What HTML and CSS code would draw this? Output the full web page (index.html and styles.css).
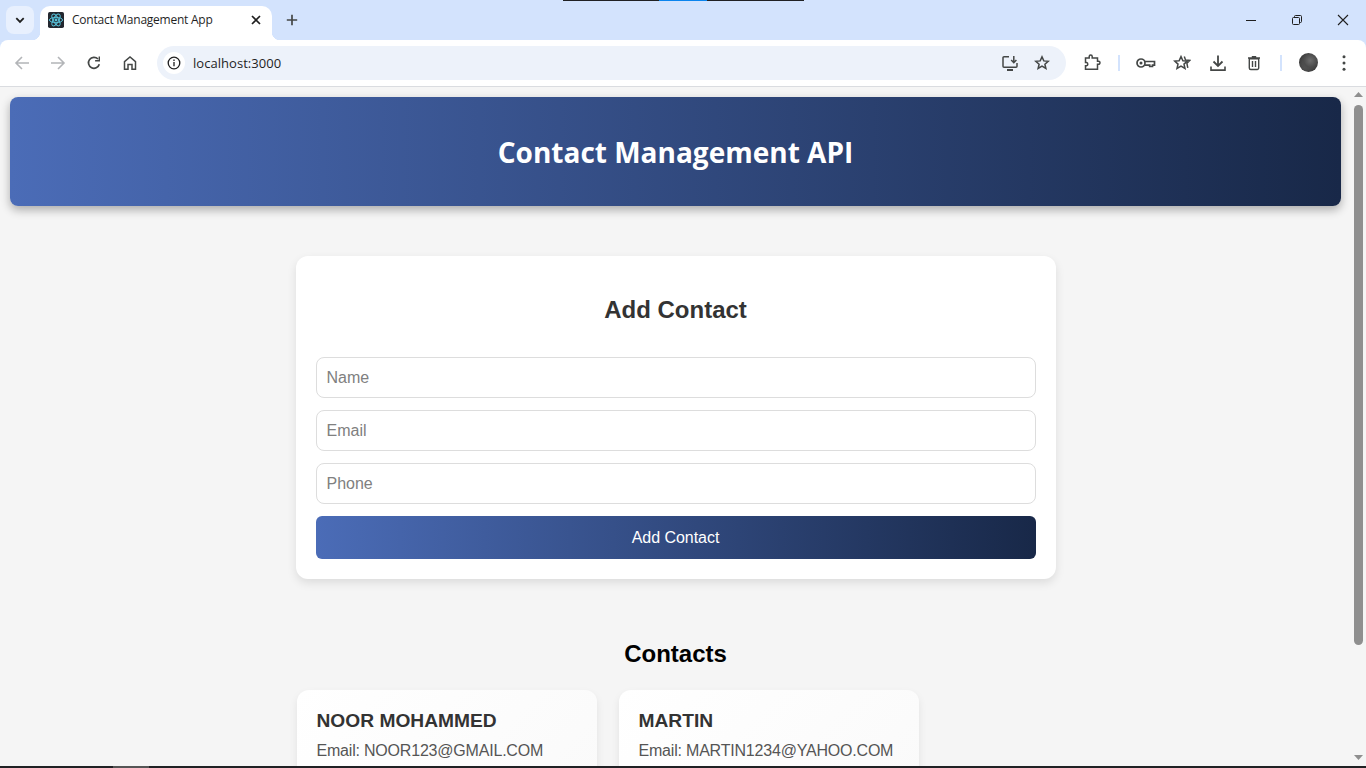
FILE: index.html
```html
<!DOCTYPE html>
<html lang="en">
<head>
<meta charset="utf-8">
<title>Contact Management App</title>
<link rel="stylesheet" href="styles.css">
</head>
<body>
<div class="top-strip"><span class="seg-dark"></span><span class="seg-blue"></span><span class="seg-dark2"></span></div>
<div class="tabstrip">
  <button class="tab-search"><svg width="12" height="12" viewBox="0 0 12 12"><path d="M2.3 4.2 6 7.9l3.7-3.7" fill="none" stroke="#1f1f1f" stroke-width="1.8"/></svg></button>
  <div class="tab">
    <span class="favicon"><svg width="16" height="16" viewBox="0 0 18 18"><rect width="18" height="18" rx="2" fill="#23272f"/><g fill="none" stroke="#58c4dc" stroke-width="1.100"><ellipse cx="9" cy="9" rx="7.400" ry="3"/><ellipse cx="9" cy="9" rx="7.400" ry="3" transform="rotate(60 9 9)"/><ellipse cx="9" cy="9" rx="7.400" ry="3" transform="rotate(120 9 9)"/></g><circle cx="9" cy="9" r="1.600" fill="#58c4dc"/></svg></span>
    <span class="tab-title">Contact Management App</span>
    <svg class="tab-close" width="10" height="10" viewBox="0 0 10 10"><path d="M1 1l8 8M9 1 1 9" stroke="#1f1f1f" stroke-width="1.700"/></svg>
  </div>
  <svg class="new-tab" width="12" height="12" viewBox="0 0 12 12"><path d="M6 .8v10.400M.8 6h10.400" stroke="#444746" stroke-width="1.700"/></svg>
  <div class="win-controls">
    <span class="win-btn"><svg width="12" height="12" viewBox="0 0 12 12"><path d="M1 6.500h10" stroke="#1f1f1f"/></svg></span>
    <span class="win-btn"><svg width="12" height="12" viewBox="0 0 12 12" fill="none" stroke="#1f1f1f"><rect x="1.500" y="3.500" width="7" height="7" rx="1"/><path d="M3.500 3.500V2.500a1 1 0 0 1 1-1h5a1 1 0 0 1 1 1v5a1 1 0 0 1-1 1h-1"/></svg></span>
    <span class="win-btn"><svg width="12" height="12" viewBox="0 0 12 12"><path d="M1 1l10 10M11 1 1 11" stroke="#1f1f1f" stroke-width="1.100"/></svg></span>
  </div>
</div>
<div class="toolbar">
  <span class="tool"><svg width="16" height="16" viewBox="0 0 16 16" fill="none" stroke="#b3b5b8" stroke-width="1.600"><path d="M15 8H2M8 2 2 8l6 6"/></svg></span>
  <span class="tool"><svg width="16" height="16" viewBox="0 0 16 16" fill="none" stroke="#b3b5b8" stroke-width="1.600"><path d="M1 8h13M8 2l6 6-6 6"/></svg></span>
  <span class="tool"><svg width="16" height="16" viewBox="0 0 16 16" fill="none" stroke="#444746" stroke-width="1.700"><path d="M13.300 9.300A5.500 5.500 0 1 1 12 4"/><path d="M13.300 1.500v4.200H9.100" stroke-width="1.400"/></svg></span>
  <span class="tool"><svg width="16" height="16" viewBox="0 0 16 16" fill="none" stroke="#444746" stroke-width="1.500"><path d="M2.500 14.200V6.600L8 2l5.500 4.600v7.600H10V9.500H6v4.700z"/></svg></span>
  <div class="omnibox">
    <span class="site-info"><svg width="14" height="14" viewBox="0 0 14 14" fill="none" stroke="#1f1f1f" stroke-width="1.300"><circle cx="7" cy="7" r="5.800"/><path d="M7 6v4.200M7 3.600v1.400"/></svg></span>
    <span class="url">localhost:3000</span>
    <span class="omni-icon"><svg width="18" height="18" viewBox="0 0 18 18" fill="none" stroke="#444746" stroke-width="1.500"><path d="M8 2.800H3a1 1 0 0 0-1 1v8.400a1 1 0 0 0 1 1h12a1 1 0 0 0 1-1V9"/><path d="M6 16h6" stroke-width="2"/><path d="M12.800 2v6.500M10.200 6l2.600 2.700L15.400 6"/></svg></span>
    <span class="omni-icon"><svg width="16" height="16" viewBox="0 0 16 16" fill="none" stroke="#444746" stroke-width="1.500"><path d="m8 1.900 1.800 4 4.400.4-3.300 2.900 1 4.300L8 11.200l-3.900 2.300 1-4.300-3.300-2.900 4.400-.4z"/></svg></span>
  </div>
  <span class="tool tool-ext"><svg width="18" height="18" viewBox="0 0 18 18" fill="none" stroke="#444746" stroke-width="1.500"><path d="M2.500 5h3.700V3.600a1.500 1.500 0 0 1 3 0V5h5.300v3.300h1a1.500 1.500 0 0 1 0 3h-1v5H2.500v-3.500h1a1.700 1.700 0 0 0 0-3.300h-1z" transform="translate(0 -1)"/></svg></span>
  <span class="divider"></span>
  <span class="tool tool-key"><svg width="20" height="12" viewBox="0 0 20 12" fill="none" stroke="#444746" stroke-width="1.700"><circle cx="5" cy="6" r="4"/><circle cx="5" cy="6" r="1.500" fill="#444746" stroke="none"/><path d="M9 4.500h9.500v3.600h-2v1.400h-2.800V8.100H9"/></svg></span>
  <span class="tool"><svg width="18" height="18" viewBox="0 0 18 18" fill="none" stroke="#444746" stroke-width="1.500"><path d="m8 2.600 1.900 4.100 4.400.4-3.300 3 1 4.400L8 12.200l-4 2.300 1-4.400-3.300-3 4.400-.4z"/><path d="m11.300 2.600 1.200 3.300 4.200.5-2.800 2.900.9 4.600"/></svg></span>
  <span class="tool"><svg width="18" height="18" viewBox="0 0 18 18" fill="none" stroke="#444746" stroke-width="1.800"><path d="M9 1.500v10M4.500 7.500 9 12l4.500-4.500"/><path d="M2 12.500v3.600h14v-3.600" stroke-width="1.600"/></svg></span>
  <span class="tool"><svg width="16" height="16" viewBox="0 0 16 16" fill="none" stroke="#444746" stroke-width="1.400"><path d="M3.300 3.800h9.400V13a1.500 1.500 0 0 1-1.500 1.500H4.800A1.500 1.500 0 0 1 3.300 13z"/><path d="M2 3h12M5.800 1.700h4.400M6.500 6v6M9.500 6v6"/></svg></span>
  <span class="divider"></span>
  <span class="tool"><span class="avatar"></span></span>
  <span class="tool"><svg width="4" height="16" viewBox="0 0 4 16" fill="#444746"><circle cx="2" cy="1.800" r="1.500"/><circle cx="2" cy="8" r="1.500"/><circle cx="2" cy="14.200" r="1.500"/></svg></span>
</div>
<div class="viewport">
  <main class="page">
    <header class="hero"><h1>Contact Management API</h1></header>
    <section class="form-card">
      <h2>Add Contact</h2>
      <form class="contact-form">
        <input type="text" placeholder="Name">
        <input type="email" placeholder="Email">
        <input type="tel" placeholder="Phone">
        <button type="button">Add Contact</button>
      </form>
    </section>
    <section class="contacts">
      <h2>Contacts</h2>
      <div class="contact-grid">
        <article class="contact-card"><h3>NOOR MOHAMMED</h3><p>Email: NOOR123@GMAIL.COM</p></article>
        <article class="contact-card"><h3>MARTIN</h3><p>Email: MARTIN1234@YAHOO.COM</p></article>
      </div>
    </section>
  </main>
  <div class="scrollbar">
    <svg class="arrow" width="15" height="17" viewBox="0 0 15 17"><path d="M7.500 5 12 10H3z" fill="#8f8f8f"/></svg>
    <div class="thumb"></div>
    <svg class="arrow arrow-down" width="15" height="17" viewBox="0 0 15 17"><path d="M7.500 11 12 6H3z" fill="#8f8f8f"/></svg>
  </div>
</div>
<div class="bottom-strip"><span class="bottom-seg"></span></div>
</body>
</html>
```
FILE: styles.css
```css
* { box-sizing: border-box; }
html, body { margin: 0; height: 768px; overflow: hidden; }
body { display: flex; flex-direction: column; background: #d3e3fd; font-family: "Liberation Sans", Arial, sans-serif; position: relative; }

.top-strip { position: absolute; top: 0; left: 563px; display: flex; height: 1px; }
.seg-dark { width: 96px; background: #202124; }
.seg-blue { width: 48px; background: #0a84ee; }
.seg-dark2 { width: 97px; background: #202124; }

.tabstrip { height: 40px; display: flex; align-items: flex-start; padding: 6px 0 0 6px; flex: none; }
.tab-search { width: 28px; height: 28px; border: 0; border-radius: 8px; background: #e8f0fe; padding: 0; display: flex; align-items: center; justify-content: center; margin-right: 6px; }
.tab { position: relative; width: 232px; height: 34px; background: #fff; border-radius: 10px 10px 0 0; display: flex; align-items: center; padding: 0 11px 6px 8px; }
.tab::before, .tab::after { content: ""; position: absolute; bottom: 0; width: 8px; height: 8px; }
.tab::before { left: -8px; background: radial-gradient(circle at 0 0, transparent 8px, #fff 8.500px); }
.tab::after { right: -8px; background: radial-gradient(circle at 100% 0, transparent 8px, #fff 8.500px); }
.favicon { display: flex; width: 16px; height: 16px; margin-right: 8px; }
.tab-title { flex: 1; font: 12px/16px "Open Sans", "Noto Sans", sans-serif; color: #1f1f1f; white-space: nowrap; letter-spacing: -.24px; }
.tab-close { flex: none; }
.new-tab { margin: 8px 0 0 14px; }
.win-controls { margin-left: auto; margin-top: -6px; display: flex; }
.win-btn { width: 46px; height: 40px; display: flex; align-items: center; justify-content: center; }

.toolbar { height: 47px; flex: none; background: #fff; border-bottom: 1px solid #dadce0; border-radius: 8px 8px 0 0; display: flex; align-items: center; padding: 0 4px 1px; }
.tool { width: 36px; height: 36px; display: flex; align-items: center; justify-content: center; flex: none; }
.omnibox { width: 909px; height: 34px; margin: 0 8px 0 9px; background: #edf2fa; border-radius: 17px; display: flex; align-items: center; padding: 0 8px 0 6px; flex: none; }
.site-info { width: 22px; height: 22px; border-radius: 50%; background: #fff; display: flex; align-items: center; justify-content: center; margin-right: 8px; }
.url { flex: 1; font: 13px/18px "Open Sans", "Noto Sans", sans-serif; color: #1f1f1f; letter-spacing: .04px; }
.omni-icon { width: 32px; height: 32px; display: flex; align-items: center; justify-content: center; }
.divider { width: 2px; height: 16px; background: #d3e3fd; margin: 0 8px; flex: none; }
.avatar { width: 19px; height: 19px; border-radius: 50%; background: radial-gradient(circle at 60% 40%, #6e6e6e 0, #4c4c4c 40%, transparent 70%), radial-gradient(circle at 35% 70%, #5a5a5a 0, #2f2f2f 60%); }

.viewport { flex: 1; min-height: 0; display: flex; background: #f5f5f5; }
.page { flex: 1; min-width: 0; overflow: hidden; padding: 10px 10px 0; }
.hero { height: 109px; border-radius: 8px; background: linear-gradient(90deg, #4b6cb7, #182848); box-shadow: 0 4px 10px rgba(0,0,0,.3); display: flex; align-items: center; justify-content: center; }
.hero h1 { margin: 0; color: #fff; font: 700 28px/40px "Open Sans", "Noto Sans", sans-serif; }

.form-card { width: 760px; margin: 50px auto 0; height: 323px; padding: 20px; background: #fff; border-radius: 12px; box-shadow: 0 4px 10px rgba(0,0,0,.1); }
.form-card h2 { margin: 20px 0 33px; font: 700 24px/28px "Liberation Sans", Arial, sans-serif; color: #333; text-align: center; }
.contact-form { display: flex; flex-direction: column; gap: 12px; }
.contact-form input { height: 41px; width: 100%; padding: 0 10px; border: 1px solid #ddd; border-radius: 8px; background: #fff; font: 16px "Liberation Sans", Arial, sans-serif; color: #333; outline: 0; }
.contact-form input::placeholder { color: #808080; }
.contact-form button { height: 43px; border: 0; border-radius: 6px; background: linear-gradient(90deg, #4b6cb7, #182848); color: #fff; font: 16px "Liberation Sans", Arial, sans-serif; letter-spacing: -.03px; }

.contacts { width: 760px; margin: 61px auto 0; }
.contacts h2 { margin: 0 0 22px; text-align: center; font: 700 24px/28px "Liberation Sans", Arial, sans-serif; color: #000; }
.contact-grid { display: flex; gap: 22px; padding-left: 1px; }
.contact-card { width: 300px; height: 180px; padding: 20px; background: linear-gradient(135deg, #fff, #f9f9f9); border-radius: 12px; box-shadow: 0 4px 8px rgba(0,0,0,.08); flex: none; }
.contact-card h3 { margin: 0 0 9px; font: 700 19.200px/22px "Liberation Sans", Arial, sans-serif; color: #333; }
.contact-card p { margin: 0; font: 16px/20px "Liberation Sans", Arial, sans-serif; color: #555; letter-spacing: -.2px; white-space: nowrap; }

.scrollbar { width: 15px; flex: none; background: #f5f5f5; display: flex; flex-direction: column; align-items: center; }
.arrow { flex: none; }
.thumb { width: 9px; height: 540px; margin-top: 1px; background: #8f8f8f; border-radius: 5px; }
.arrow-down { margin-top: auto; margin-bottom: 2px; }

.bottom-strip { position: absolute; left: 0; right: 0; bottom: 0; height: 2px; background: #202124; }
.bottom-seg { display: block; width: 36px; height: 2px; margin-left: 113px; background: #555; }
```
